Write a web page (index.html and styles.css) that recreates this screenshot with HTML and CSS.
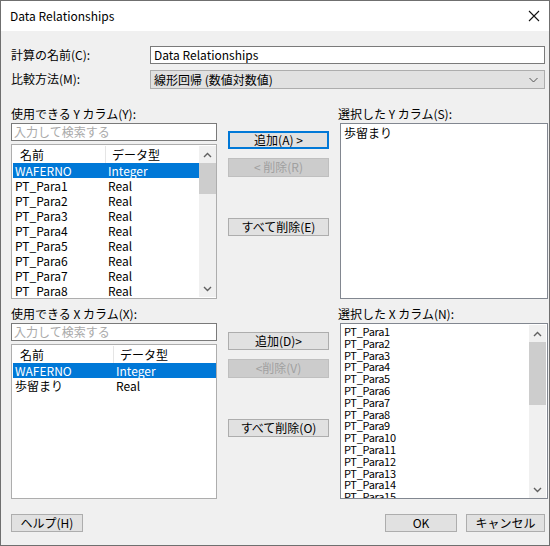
FILE: index.html
```html
<!DOCTYPE html>
<html lang="ja">
<head>
<meta charset="utf-8">
<title>Data Relationships</title>
<link rel="stylesheet" href="styles.css">
</head>
<body>
<div class="window">
  <div class="titlebar">
    <span class="title">Data Relationships</span>
    <svg class="close" width="12" height="12" viewBox="0 0 12 12"><path d="M1 1 L11 11 M11 1 L1 11" stroke="#111" stroke-width="1.1" fill="none"/></svg>
  </div>
  <div class="content">
    <div class="form">
      <div class="flabel">計算の名前(C):</div>
      <div class="textbox">Data Relationships</div>
      <div class="flabel">比較方法(M):</div>
      <div class="combo"><span>線形回帰 (数値対数値)</span>
        <svg width="9" height="6" viewBox="0 0 9 6"><path d="M0.5 1 L4.5 5 L8.5 1" stroke="#555" stroke-width="1" fill="none"/></svg>
      </div>
    </div>

    <div class="section sec-y">
      <div class="col-left">
        <div class="slabel">使用できる Y カラム(Y):</div>
        <div class="search">入力して検索する</div>
        <div class="listview">
          <div class="lv-main">
            <div class="lv-head"><span class="c1 w1">名前</span><span class="c2">データ型</span></div>
            <div class="row sel"><span class="d1 w1">WAFERNO</span><span class="d2">Integer</span></div>
            <div class="row"><span class="d1 w1">PT_Para1</span><span class="d2">Real</span></div>
            <div class="row"><span class="d1 w1">PT_Para2</span><span class="d2">Real</span></div>
            <div class="row"><span class="d1 w1">PT_Para3</span><span class="d2">Real</span></div>
            <div class="row"><span class="d1 w1">PT_Para4</span><span class="d2">Real</span></div>
            <div class="row"><span class="d1 w1">PT_Para5</span><span class="d2">Real</span></div>
            <div class="row"><span class="d1 w1">PT_Para6</span><span class="d2">Real</span></div>
            <div class="row"><span class="d1 w1">PT_Para7</span><span class="d2">Real</span></div>
            <div class="row"><span class="d1 w1">PT_Para8</span><span class="d2">Real</span></div>
          </div>
          <div class="vscroll">
            <svg class="arr" width="9" height="6" viewBox="0 0 9 6"><path d="M1 5 L4.5 1.5 L8 5" stroke="#606060" stroke-width="1.4" fill="none"/></svg>
            <div class="track"><div class="thumb thumb-y"></div></div>
            <svg class="arr" width="9" height="6" viewBox="0 0 9 6"><path d="M1 1 L4.5 4.5 L8 1" stroke="#606060" stroke-width="1.4" fill="none"/></svg>
          </div>
        </div>
      </div>
      <div class="col-mid mid-y">
        <div class="btn focus">追加(A) &gt;</div>
        <div class="btn disabled b2">&lt; 削除(R)</div>
        <div class="btn b3">すべて削除(E)</div>
      </div>
      <div class="col-right">
        <div class="slabel rl">選択した Y カラム(S):</div>
        <div class="listbox">
          <div class="lb-items"><div class="item">歩留まり</div></div>
        </div>
      </div>
    </div>

    <div class="section sec-x">
      <div class="col-left">
        <div class="slabel">使用できる X カラム(X):</div>
        <div class="search">入力して検索する</div>
        <div class="listview">
          <div class="lv-main">
            <div class="lv-head"><span class="c1 w2">名前</span><span class="c2">データ型</span></div>
            <div class="row sel"><span class="d1 w2">WAFERNO</span><span class="d2">Integer</span></div>
            <div class="row"><span class="d1 w2">歩留まり</span><span class="d2">Real</span></div>
          </div>
        </div>
      </div>
      <div class="col-mid mid-x">
        <div class="btn">追加(D)&gt;</div>
        <div class="btn disabled b2">&lt;削除(V)</div>
        <div class="btn b3">すべて削除(O)</div>
      </div>
      <div class="col-right">
        <div class="slabel rl">選択した X カラム(N):</div>
        <div class="listbox">
          <div class="lb-items narrow">
            <div class="item">PT_Para1</div>
            <div class="item">PT_Para2</div>
            <div class="item">PT_Para3</div>
            <div class="item">PT_Para4</div>
            <div class="item">PT_Para5</div>
            <div class="item">PT_Para6</div>
            <div class="item">PT_Para7</div>
            <div class="item">PT_Para8</div>
            <div class="item">PT_Para9</div>
            <div class="item">PT_Para10</div>
            <div class="item">PT_Para11</div>
            <div class="item">PT_Para12</div>
            <div class="item">PT_Para13</div>
            <div class="item">PT_Para14</div>
            <div class="item">PT_Para15</div>
          </div>
          <div class="vscroll small">
            <svg class="arr" width="9" height="6" viewBox="0 0 9 6"><path d="M1 5 L4.5 1.5 L8 5" stroke="#606060" stroke-width="1.4" fill="none"/></svg>
            <div class="track"><div class="thumb thumb-x"></div></div>
            <svg class="arr" width="9" height="6" viewBox="0 0 9 6"><path d="M1 1 L4.5 4.5 L8 1" stroke="#606060" stroke-width="1.4" fill="none"/></svg>
          </div>
        </div>
      </div>
    </div>

    <div class="footer">
      <div class="btn fbtn">ヘルプ(H)</div>
      <div class="spacer"></div>
      <div class="btn fbtn">OK</div>
      <div class="btn fbtn cancel">キャンセル</div>
    </div>
  </div>
</div>
</body>
</html>
```
FILE: styles.css
```css
* { box-sizing: border-box; }
html, body { margin: 0; padding: 0; background: #f0f0f0; }
body {
  font-family: "Noto Sans CJK JP", "Noto Sans", sans-serif;
  font-size: 12px;
  color: #000;
}
.window {
  width: 550px;
  height: 546px;
  border: 1px solid #6f6f6f;
  background: #f0f0f0;
  display: flex;
  flex-direction: column;
}
.titlebar {
  height: 30px;
  background: #fff;
  display: flex;
  align-items: center;
  padding-left: 9px;
  padding-right: 9px;
  flex: none;
}
.title { flex: 1; line-height: 14px; }
.close { display: block; }
.content {
  padding: 15px 0 0 10px;
  flex: 1;
}
.form {
  display: grid;
  grid-template-columns: 139px 395px;
  grid-template-rows: 18px 19px;
  row-gap: 6px;
}
.flabel { line-height: 18px; }
.textbox {
  border: 1px solid #7a7a7a;
  background: #fff;
  line-height: 16px;
  padding-left: 3px;
}
.combo {
  border: 1px solid #adadad;
  background: #e1e1e1;
  line-height: 17px;
  padding-left: 3px;
  padding-right: 6px;
  display: flex;
  align-items: center;
  justify-content: space-between;
}
.section {
  display: grid;
  grid-template-columns: 206px 101px 208px;
  column-gap: 11px;
}
.sec-y { margin-top: 18px; }
.sec-x { margin-top: 8px; }
.col-left, .col-right { display: flex; flex-direction: column; }
.slabel { height: 14px; line-height: 14px; margin-bottom: 2px; white-space: nowrap; }
.rl { margin-left: -2px; }
.search {
  height: 18px;
  border: 1px solid #7a7a7a;
  background: #fff;
  color: #a9a9a9;
  line-height: 16px;
  padding-left: 2px;
  margin-bottom: 3px;
}
.listview {
  height: 155px;
  border: 1px solid #adadad;
  background: #fff;
  display: flex;
  padding: 1px 0 1px 1px;
  overflow: hidden;
}
.lv-main { flex: 1; overflow: hidden; }
.lv-head {
  height: 17px;
  display: flex;
  line-height: 17px;
}
.lv-head .c1 { padding-left: 7px; border-right: 1px solid #e5e5e5; }
.lv-head .c2 { padding-left: 6px; }
.w1 { width: 93px; flex: none; }
.w2 { width: 101px; flex: none; }
.row {
  height: 15px;
  line-height: 15px;
  display: flex;
  white-space: nowrap;
}
.row .d1 { padding-left: 2px; }
.row .d2 { padding-left: 2px; }
.row.sel { background: #0078d7; color: #fff; }
.vscroll {
  width: 17px;
  flex: none;
  background: #f0f0f0;
  display: flex;
  flex-direction: column;
  align-items: center;
}
.vscroll .arr { display: block; margin: 6px 0 5px; }
.track { flex: 1; width: 100%; }
.thumb { background: #cdcdcd; width: 100%; }
.thumb-y { height: 31px; }
.thumb-x { height: 63px; }
.col-mid { display: flex; flex-direction: column; }
.btn {
  height: 18px;
  border: 1px solid #adadad;
  background: #e1e1e1;
  text-align: center;
  line-height: 16px;
  white-space: nowrap;
}
.btn.focus { border: 2px solid #0078d7; line-height: 14px; }
.btn.disabled { background: #cccccc; border-color: #bfbfbf; color: #a0a0a0; }
.mid-y { padding-top: 24px; }
.mid-x { padding-top: 25px; }
.b2 { margin-top: 9px; height: 19px; }
.b3 { margin-top: 41px; }
.listbox {
  height: 176px;
  border: 1px solid #828790;
  background: #fff;
  display: flex;
  overflow: hidden;
}
.lb-items { flex: 1; padding: 1px 0 0 3px; overflow: hidden; }
.item { line-height: 15px; white-space: nowrap; }
.narrow { padding-top: 2px; }
.narrow .item { font-size: 11px; line-height: 11.8px; height: 11.8px; letter-spacing: -0.3px; }
.vscroll.small { margin: 1px 1px 0 0; }
.footer {
  display: flex;
  margin-top: 15px;
  padding-right: 4px;
  column-gap: 9px;
}
.spacer { flex: 1; }
.fbtn { width: 72px; }
.fbtn.cancel { width: 79px; }
```
